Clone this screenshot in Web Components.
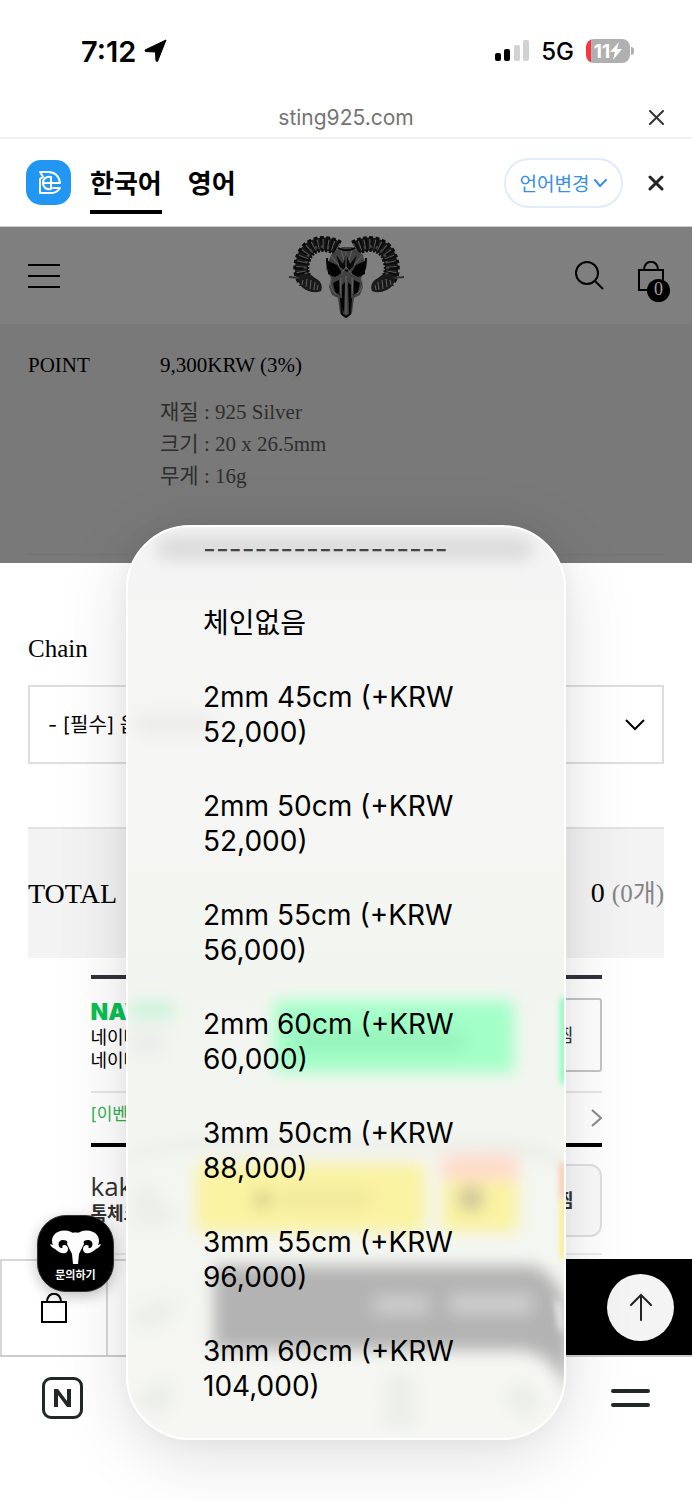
<!DOCTYPE html>
<html lang="ko">
<head>
<meta charset="utf-8">
<meta name="viewport" content="width=device-width, initial-scale=1">
<title>sting925.com</title>
<style>
    :root {
        --sans: Inter, "Noto Sans CJK KR", sans-serif;
        --serif: "Liberation Serif", "Noto Sans CJK KR", serif;
        --gutter: 28px;
        --line: #dedede;
    }

    body {
        margin: 0;
        background: #fff;
        color: #000;
        font-family: var(--sans);
    }
</style>
</head>
<body>
<shop-screen>
    <status-bar time="7:12" network="5G" battery="11"></status-bar>
    <url-bar>sting925.com</url-bar>
    <translate-bar></translate-bar>
    <shop-header count="0"></shop-header>
    <product-info></product-info>
    <option-field label="Chain"></option-field>
    <total-row label="TOTAL" amount="0" quantity="0개"></total-row>
    <pay-panel></pay-panel>
    <action-bar></action-bar>
    <bottom-nav></bottom-nav>
    <chat-button slot="float">문의하기</chat-button>
    <option-popup slot="popup">
        <option-item divider>-------------------</option-item>
        <option-item>체인없음</option-item>
        <option-item>2mm 45cm (+KRW 52,000)</option-item>
        <option-item>2mm 50cm (+KRW 52,000)</option-item>
        <option-item>2mm 55cm (+KRW 56,000)</option-item>
        <option-item>2mm 60cm (+KRW 60,000)</option-item>
        <option-item>3mm 50cm (+KRW 88,000)</option-item>
        <option-item>3mm 55cm (+KRW 96,000)</option-item>
        <option-item>3mm 60cm (+KRW 104,000)</option-item>
    </option-popup>
</shop-screen>

<script>
const RESET = `
    :host, *, *::before, *::after { box-sizing: border-box; }
    button {
        margin: 0;
        padding: 0;
        border: 0;
        background: none;
        color: inherit;
        font: inherit;
        cursor: pointer;
    }
    a { color: inherit; text-decoration: none; }
    svg { display: block; }
`;

class ShopElement extends HTMLElement {
    constructor() {
        super();
        this.attachShadow({ mode: 'open' });
    }

    connectedCallback() {
        this.shadowRoot.innerHTML = `<style>${RESET}${this.styles()}</style>${this.markup()}`;
    }

    attr(name) {
        return this.getAttribute(name) || '';
    }
}

class ShopScreen extends ShopElement {
    styles() {
        return `
            :host { display: block; position: relative; min-height: 100vh; overflow: hidden; }
            ::slotted([slot=float]) { position: absolute; left: 37px; top: 1215px; z-index: 2; }
            ::slotted([slot=popup]) {
                position: absolute;
                z-index: 3;
                top: 525px;
                left: 0;
                right: 0;
                margin: 0 auto;
                width: min(440px, calc(100% - 48px));
            }
        `;
    }

    markup() {
        return `<slot></slot><slot name="float"></slot><slot name="popup"></slot>`;
    }
}

class StatusBar extends ShopElement {
    styles() {
        return `
            :host {
                display: flex;
                align-items: center;
                justify-content: space-between;
                height: 98px;
                padding: 4px 62px 0 81px;
            }
            div { display: flex; align-items: center; }
            .time { gap: 8px; font-size: 29px; font-weight: 600; }
            .state { gap: 12px; font-size: 24px; font-weight: 500; }
            .battery {
                position: relative;
                justify-content: center;
                width: 44px;
                height: 24px;
                border-radius: 8px;
                background: linear-gradient(90deg, #f8363f 5px, #b0b0b0 5px);
                color: #fff;
                font-size: 19px;
                font-weight: 700;
            }
            .battery::after {
                content: "";
                position: absolute;
                right: -4px;
                width: 3px;
                height: 8px;
                border-radius: 0 3px 3px 0;
                background: #b0b0b0;
            }
        `;
    }

    markup() {
        return `
            <div class="time">
                <span>${this.attr('time')}</span>
                <svg width="24" height="24" viewBox="0 0 24 24"><path stroke="#000" stroke-linejoin="round" d="M22 1 13.500 22.500l-1.500-.500L11.500 13 1.500 12.500l-.500-1.500z"/></svg>
            </div>
            <div class="state">
                <svg width="34" height="22" viewBox="0 0 34 22">
                    <rect x="0" y="13" width="6" height="8" rx="2"/>
                    <rect x="9" y="9" width="6" height="12" rx="2"/>
                    <rect x="19" y="5" width="6" height="16" rx="2" fill="#d2d2d2"/>
                    <rect x="28" y="0" width="6" height="21" rx="2" fill="#d2d2d2"/>
                </svg>
                <span>${this.attr('network')}</span>
                <div class="battery">
                    <span>${this.attr('battery')}</span>
                    <svg width="12" height="18" viewBox="0 0 12 18"><path fill="#fff" d="M9 0 0 10h5L3 18l9-11H7z"/></svg>
                </div>
            </div>
        `;
    }
}

class UrlBar extends ShopElement {
    styles() {
        return `
            :host {
                display: grid;
                grid-template-columns: 1fr auto 1fr;
                align-items: center;
                height: 41px;
                padding: 0 var(--gutter);
                border-bottom: 2px solid #f0f0f2;
                color: #747474;
                font-size: 21px;
            }
            button { grid-column: 3; justify-self: end; }
            span { grid-column: 2; }
        `;
    }

    markup() {
        return `
            <span><slot></slot></span>
            <button aria-label="닫기"><svg width="15" height="15" viewBox="0 0 15 15" fill="none" stroke="#333" stroke-width="2" stroke-linecap="round"><path d="M1 1l13 13M14 1L1 14"/></svg></button>
        `;
    }
}

class TranslateBar extends ShopElement {
    styles() {
        return `
            :host {
                display: flex;
                align-items: center;
                height: 88px;
                padding: 0 var(--gutter) 0 26px;
                border-bottom: 1px solid #ccc;
            }
            nav { display: flex; gap: 26px; margin-left: 19px; margin-right: auto; }
            nav a {
                padding: 8px 0 6px;
                border-bottom: 4px solid transparent;
                border-top: 4px solid transparent;
                font-size: 26px;
                font-weight: 700;
                line-height: 40px;
            }
            nav a.on { border-bottom-color: #000; }
            .change {
                display: flex;
                align-items: center;
                justify-content: center;
                gap: 5px;
                width: 119px;
                height: 50px;
                margin-right: 25px;
                border: 2px solid #e0ebfc;
                border-radius: 25px;
                color: #378fe6;
                font-size: 19px;
            }
        `;
    }

    markup() {
        return `
            <svg width="45" height="45" viewBox="0 0 45 45">
                <rect width="45" height="45" rx="15" fill="#2196f3"/>
                <g fill="none" stroke="#fff" stroke-width="2" stroke-linejoin="round" stroke-linecap="round">
                    <path d="M14 12h8c7 0 11 4 12 11h-9M14 12l3 5-3 2v14h12c4 0 6-2 8-5h-7"/>
                    <path d="M25 17c-5-1-8 2-8 6s3 7 8 6M25 17v12M18 23h7"/>
                </g>
            </svg>
            <nav><a class="on" href="#ko">한국어</a><a href="#en">영어</a></nav>
            <button class="change">언어변경<svg width="13" height="8" viewBox="0 0 13 8" fill="none" stroke="currentColor" stroke-width="2" stroke-linecap="round"><path d="M1 1l5 6 6-6"/></svg></button>
            <button aria-label="닫기"><svg width="16" height="16" viewBox="0 0 16 16" fill="none" stroke="#222" stroke-width="3" stroke-linecap="round"><path d="M2 2l12 12M14 2L2 14"/></svg></button>
        `;
    }
}

class RamLogo extends ShopElement {
    styles() {
        return `:host { display: block; }`;
    }

    // The horn is one thick stroke; dashed copies over it make the ridges.
    horn() {
        const d = 'M57 20C44 13 29 15 23 28C19 38 19 46 25 53';
        return `
            <path d="${d}" stroke="#181818" stroke-width="13"/>
            <path d="${d}" stroke="#0c0c0c" stroke-width="16" stroke-dasharray="3 2"/>
            <path d="${d}" stroke="#5c5c5c" stroke-width="10" stroke-dasharray="1 4"/>
            <path d="M48 20C38 16 29 20 26 31C23 42 24 46 28 50" stroke="#444" stroke-width="3" stroke-dasharray="2 4"/>
            <path d="M16 49c3-4 13-4 18 1 6 3 8 8 6 13-7 3-16 0-21-6z" fill="#1a1a1a"/>
            <path d="M22 52l-1 5M26 51l-1 8M30 52l-1 9M34 54l-1 8M37 57l-1 5" stroke="#626262"/>
            <path d="M8 49l10 1" stroke="#333" stroke-width="2"/>
        `;
    }

    markup() {
        return `
            <svg width="130" height="96" viewBox="0 0 130 96" fill="none" role="img" aria-label="Sting 925">
                <g>${this.horn()}</g>
                <g transform="matrix(-1 0 0 1 131 0)">${this.horn()}</g>
                <path d="M50 27l8-6 3-2h10l3 2 8 6 3 14-5 9 2 9-3 8-6 3-2 15-4 4h-4l-4-4-2-15-6-3-3-8 2-9-5-9z" fill="#414141"/>
                <path d="M47 33l9 4 5 8-7 4-7-3zM84 33l-9 4-5 8 7 4 7-3zM52 55l6-3 1 15-5-3zM79 55l-6-3-1 15 5-3zM61 57l3-3-1 31-2-6zM70 57l-3-3 1 31 2-6z" fill="#030303"/>
                <path d="M55 27l7 9 3-10 4 10 7-9-4 12-6 5-7-5z" fill="#0a0a0a"/>
                <path d="M65 22v20M60 22l3 10M71 22l-3 10M50 28l8 9M81 28l-8 9M60 46l5-7 6 7M60 50l-1 16M71 50l1 16M65 48v38M51 51c-3 4-1 11 4 15M80 51c3 4 1 11-4 15" stroke="#666"/>
                <path d="M57 20c5 3 12 3 17 0M46 30c0 6 0 12 6 18M85 30c0 6 0 12-6 18M60 70l1 16 4 3 4-3 1-16" stroke="#080808" stroke-width="2"/>
            </svg>
        `;
    }
}

class ShopHeader extends ShopElement {
    styles() {
        return `
            :host {
                display: grid;
                grid-template-columns: 1fr auto 1fr;
                align-items: center;
                height: 97px;
                padding: 0 var(--gutter);
                background: #7f7f7f;
            }
            button { justify-self: start; }
            .tools { display: flex; justify-self: end; align-items: center; gap: 34px; }
            .bag { position: relative; }
            .count {
                position: absolute;
                left: 9px;
                top: 18px;
                width: 23px;
                height: 23px;
                border-radius: 50%;
                background: #000;
                color: #a0a0a0;
                font: 18px/20px var(--serif);
                text-align: center;
            }
        `;
    }

    markup() {
        return `
            <button aria-label="메뉴"><svg width="32" height="26" viewBox="0 0 32 26" stroke="#000" stroke-width="2"><path d="M0 2h32M0 13h32M0 24h32"/></svg></button>
            <ram-logo></ram-logo>
            <div class="tools">
                <button aria-label="검색"><svg width="29" height="29" viewBox="0 0 29 29" fill="none" stroke="#000" stroke-width="2"><circle cx="12" cy="12" r="11"/><path d="M20 20l8 8"/></svg></button>
                <button class="bag" aria-label="장바구니"><svg width="26" height="30" viewBox="0 0 26 30" fill="none" stroke="#000" stroke-width="2"><path d="M1 9h24v20H1zM6 9c0-11 14-11 14 0"/></svg><span class="count">${this.attr('count')}</span></button>
            </div>
        `;
    }
}

class ProductInfo extends ShopElement {
    styles() {
        return `
            :host {
                display: block;
                height: 239px;
                padding: 25px var(--gutter) 0;
                background: #797979;
                font: 21px/32px var(--serif);
            }
            dl { display: grid; grid-template-columns: 132px 1fr; row-gap: 15px; margin: 0; height: 206px; align-content: start; border-bottom: 1px solid #737373; }
            dd { margin: 0; }
            .spec { grid-column: 2; color: #2e2e2e; }
        `;
    }

    markup() {
        return `
            <dl>
                <dt>POINT</dt>
                <dd>9,300KRW (3%)</dd>
                <dd class="spec">재질 : 925 Silver<br>크기 : 20 x 26.5mm<br>무게 : 16g</dd>
            </dl>
        `;
    }
}

class OptionField extends ShopElement {
    styles() {
        return `
            :host { display: block; padding: 72px var(--gutter) 0; }
            label { display: block; margin-bottom: 22px; font: 25px/28px var(--serif); }
            .box { display: grid; align-items: center; }
            .box > * { grid-area: 1 / 1; }
            svg { justify-self: end; margin-right: 19px; pointer-events: none; }
            select {
                appearance: none;
                width: 100%;
                height: 79px;
                padding: 0 18px;
                border: 2px solid var(--line);
                border-radius: 0;
                background: #fff;
                color: #000;
                font: 20px var(--sans);
            }
        `;
    }

    markup() {
        return `
            <label for="chain">${this.attr('label')}</label>
            <div class="box">
                <select id="chain"><option>- [필수] 옵션</option></select>
                <svg width="20" height="12" viewBox="0 0 20 12" fill="none" stroke="#000" stroke-width="2"><path d="M1 1l9 9 9-9"/></svg>
            </div>
        `;
    }
}

class TotalRow extends ShopElement {
    styles() {
        return `
            :host {
                display: flex;
                align-items: center;
                justify-content: space-between;
                height: 131px;
                margin: 63px var(--gutter) 0;
                border-top: 2px solid #e2e2e2;
                background: #f3f3f3;
                font: 28px/32px var(--serif);
            }
            small { color: #858585; font-size: 25px; }
        `;
    }

    markup() {
        return `<span>${this.attr('label')}</span><span>${this.attr('amount')} <small>(${this.attr('quantity')})</small></span>`;
    }
}

class PayPanel extends ShopElement {
    styles() {
        return `
            :host {
                display: block;
                width: 511px;
                max-width: calc(100% - 56px);
                margin: 17px auto 0;
                font-size: 18px;
                line-height: 23px;
            }
            section { display: flex; justify-content: space-between; }
            .naver { height: 118px; padding-top: 19px; border-top: 4px solid #32323c; border-bottom: 2px solid #e6e6e6; }
            .brand { display: block; color: #0abf53; font: 900 23px/28px Inter, sans-serif; }
            .event {
                display: flex;
                justify-content: space-between;
                align-items: center;
                height: 54px;
                padding-bottom: 8px;
                border-bottom: 4px solid #000;
                color: #32b050;
                font-size: 17px;
            }
            .event svg { margin-top: 8px; }
            .kakao { height: 108px; padding-top: 17px; border-bottom: 2px solid #ececec; color: #333; }
            .kakao .brand { margin-top: 6px; color: #333; font: 26px/32px "Open Sans", sans-serif; }
            .kakao strong { font-size: 18px; }
            button {
                width: 73px;
                height: 74px;
                border: 2px solid #c4c4c4;
                border-radius: 3px;
                background: #fff;
                color: #333;
            }
            .kakao button { height: 73px; border-color: #e0e0e0; border-radius: 12px; background: #fafafa; font-weight: 700; }
            p { margin: 0; }
        `;
    }

    markup() {
        return `
            <section class="naver">
                <p><b class="brand">NAVER</b>네이버<br>네이버</p>
                <button>찜</button>
            </section>
            <a class="event" href="#event">[이벤트]<svg width="11" height="18" viewBox="0 0 11 18" fill="none" stroke="#888" stroke-width="2"><path d="M1 1l9 8-9 8"/></svg></a>
            <section class="kakao">
                <p><span class="brand">kakao</span><strong>톡체크</strong></p>
                <button>찜</button>
            </section>
        `;
    }
}

class ActionBar extends ShopElement {
    styles() {
        return `
            :host {
                display: grid;
                grid-template-columns: 106px 106px 1fr;
                height: 98px;
                margin-top: 4px;
                border-bottom: 2px solid #ccc;
            }
            .cell { display: grid; place-items: center; border: 2px solid #d6d6d6; border-width: 2px 0 0 2px; }
            .buy { display: flex; align-items: center; justify-content: flex-end; padding-right: 18px; background: #000; }
            .top { display: grid; place-items: center; width: 67px; height: 67px; border-radius: 50%; background: #f4f4f4; }
        `;
    }

    markup() {
        return `
            <button class="cell" aria-label="장바구니"><svg width="26" height="30" viewBox="0 0 26 30" fill="none" stroke="#000" stroke-width="2"><path d="M1 9h24v20H1zM6 9c0-11 14-11 14 0"/></svg></button>
            <button class="cell" aria-label="관심상품"></button>
            <div class="buy">
                <a class="top" href="#top" aria-label="맨 위로"><svg width="24" height="28" viewBox="0 0 24 28" fill="none" stroke="#222" stroke-width="2" stroke-linecap="round"><path d="M12 27V2M2 12L12 2l10 10"/></svg></a>
            </div>
        `;
    }
}

class BottomNav extends ShopElement {
    styles() {
        return `
            :host { display: flex; justify-content: space-between; align-items: flex-start; height: 142px; padding: 20px 42px 0; }
            a { display: grid; place-items: center; height: 42px; }
            .n { width: 41px; border: 3px solid #222827; border-radius: 9px; }
        `;
    }

    markup() {
        return `
            <a class="n" href="#naver" aria-label="네이버"><svg width="19" height="18" viewBox="0 0 19 18"><path fill="#222827" d="M1 0h4l9 12V0h4v18h-4L5 6v12H1z"/></svg></a>
            <a href="#menu" aria-label="메뉴"><svg width="39" height="18" viewBox="0 0 39 18" stroke="#222827" stroke-width="4" stroke-linecap="round"><path d="M2 2h35M2 16h35"/></svg></a>
        `;
    }
}

class ChatButton extends ShopElement {
    styles() {
        return `
            :host { display: block; }
            button {
                display: flex;
                flex-direction: column;
                align-items: center;
                width: 77px;
                height: 77px;
                padding-top: 14px;
                border: 1px solid #333;
                border-radius: 29px;
                background: #000;
                color: #fff;
                font-size: 11px;
                font-weight: 700;
                line-height: 20px;
                box-shadow: 0 4px 14px rgba(0, 0, 0, .25);
            }
        `;
    }

    markup() {
        const horn = 'M25 5C21-1 8-1 4 5 1 9 2 13 3 15L0 14c1 3 3 4 5 5 3 3 9 6 12 3 3-4-1-9-5-6 1 1 1 2-1 2-4-2-3-8 2-8 5 0 5 3 7 6z';
        return `
            <button>
                <svg width="51" height="35" viewBox="0 0 51 35" fill="#fff">
                    <path d="${horn}"/>
                    <path d="${horn}" transform="matrix(-1 0 0 1 51 0)"/>
                    <path d="M19 4c4-2 9-2 13 0l2 10-3 6-2 4-1 10h-5l-1-10-2-4-3-6z"/>
                </svg>
                <slot></slot>
            </button>
        `;
    }
}

class OptionItem extends ShopElement {
    styles() {
        return `
            :host { display: block; }
            button { display: block; width: 100%; text-align: left; font-size: 28px; line-height: 35px; }
            :host([divider]) button { color: #444; }
        `;
    }

    markup() {
        return `<button role="option"><slot></slot></button>`;
    }
}

class OptionPopup extends ShopElement {
    styles() {
        return `
            :host {
                display: block;
                overflow: hidden;
                border: 2px solid #fff;
                border-radius: 64px;
                background: linear-gradient(#f4f4f4, #f6f6f4 30%, #f2f5ef 48%, #f6f7f3);
                box-shadow: 0 16px 70px rgba(0, 0, 0, .13), 0 0 24px rgba(0, 0, 0, .04);
            }
            .glass { position: absolute; inset: 0; width: 100%; height: 100%; }
            .list {
                position: relative;
                display: flex;
                flex-direction: column;
                gap: 39px;
                padding: 5px 74px 34px 75px;
            }
        `;
    }

    markup() {
        return `
            <svg class="glass" viewBox="0 0 436 910" preserveAspectRatio="none" aria-hidden="true">
                <defs>
                    <filter id="soft" x="-30%" y="-60%" width="160%" height="220%"><feGaussianBlur stdDeviation="8"/></filter>
                    <filter id="edge" x="-300%" y="-30%" width="700%" height="160%"><feGaussianBlur stdDeviation="3"/></filter>
                </defs>
                <g filter="url(#soft)">
                    <rect x="28" y="9" width="378" height="25" rx="12" fill="#dcdcdc"/>
                    <rect x="8" y="188" width="76" height="18" fill="#ebebeb"/>
                    <rect x="2" y="475" width="44" height="15" fill="#c5f3d5"/>
                    <rect x="2" y="501" width="36" height="28" fill="#ebeeea"/>
                    <path d="M0 626q30-12 70-12h290q50 0 76 20v6q-30-20-76-20H70q-40 0-70 12z" fill="#e4e6e1"/>
                    <path d="M4 658h28v22H4zM4 684l42-8v20l-42 6zM4 782l44-16-4 28-36 8zM4 876q20-30 44-20l-10 34z" fill="#eceeea"/>
                    <rect x="146" y="473" width="240" height="72" fill="#a3ffc8"/>
                    <rect x="166" y="502" width="170" height="22" fill="#8debb2" opacity=".6"/>
                    <rect x="68" y="636" width="229" height="68" fill="#faf3a2"/>
                    <rect x="314" y="644" width="76" height="60" fill="#faf3a2"/>
                    <rect x="314" y="627" width="76" height="26" fill="#ffdccb"/>
                    <circle cx="135" cy="672" r="9" fill="#cfca8a"/>
                    <rect x="152" y="664" width="90" height="14" fill="#eee69a"/>
                    <circle cx="343" cy="671" r="13" fill="#ccc399"/>
                    <path d="M86 738h320q30 12 36 60v80q-6-48-48-56H86z" fill="#b3b3b3"/>
                    <path d="M246 768h54v18h-54zM322 766h82v20h-82z" fill="#cecece"/>
                    <path d="M260 870a16 16 0 1 1 24 0l6 30h-36zM376 866q16-22 36-2l-4 28-26-10z" fill="#eceee9"/>
                </g>
                <g filter="url(#edge)">
                    <rect x="433" y="470" width="5" height="86" fill="#5dffa8"/>
                    <rect x="432" y="635" width="5" height="36" fill="#ffbb9b"/>
                    <rect x="433" y="671" width="5" height="60" fill="#fbea62"/>
                    <path d="M426 770l8 8 4 28-8-6z" fill="#e5e5e5"/>
                </g>
            </svg>
            <div class="list" role="listbox" aria-label="Chain"><slot></slot></div>
        `;
    }
}

customElements.define('shop-screen', ShopScreen);
customElements.define('status-bar', StatusBar);
customElements.define('url-bar', UrlBar);
customElements.define('translate-bar', TranslateBar);
customElements.define('ram-logo', RamLogo);
customElements.define('shop-header', ShopHeader);
customElements.define('product-info', ProductInfo);
customElements.define('option-field', OptionField);
customElements.define('total-row', TotalRow);
customElements.define('pay-panel', PayPanel);
customElements.define('action-bar', ActionBar);
customElements.define('bottom-nav', BottomNav);
customElements.define('chat-button', ChatButton);
customElements.define('option-item', OptionItem);
customElements.define('option-popup', OptionPopup);
</script>
</body>
</html>
